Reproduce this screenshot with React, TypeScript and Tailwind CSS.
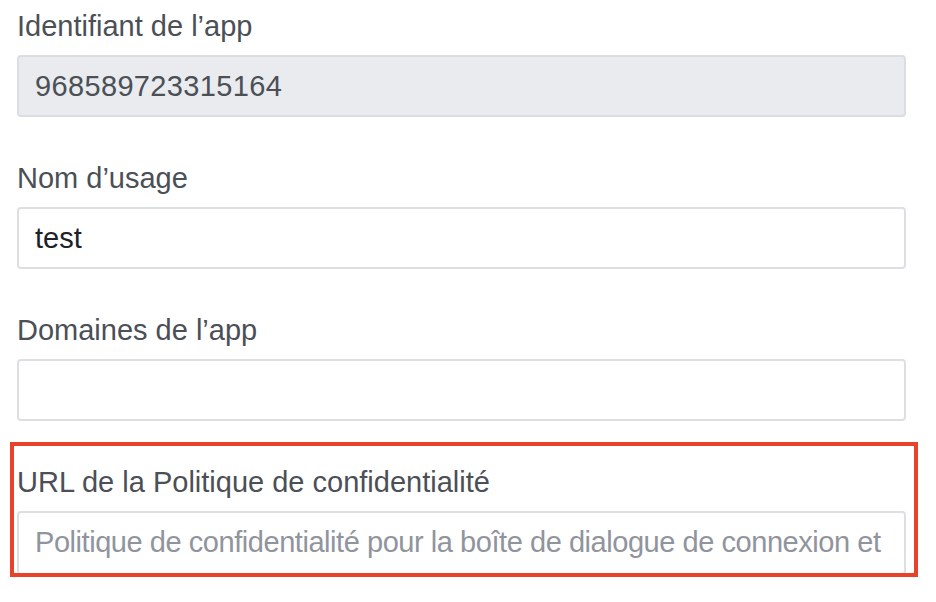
import React from "react";

function Field({ label, children }: { label: string; children: React.ReactNode }) {
  return (
    <div className="flex flex-col">
      <label className="text-[29px] leading-[34px] text-[#4b4f56]">{label}</label>
      <div className="mt-[12px]">{children}</div>
    </div>
  );
}

const inputBase =
  "w-[889px] rounded-[4px] border-2 px-4 text-[29px] outline-none font-['Liberation_Sans',sans-serif]";

export default function App() {
  return (
    <div className="w-[936px] h-[602px] overflow-hidden bg-white pl-[17px] pt-[9px] font-['Liberation_Sans',Arial,sans-serif]">
      <div className="flex flex-col gap-[44px]">
        <Field label="Identifiant de l’app">
          <input
            className={inputBase + " h-[62px] tracking-[0.35px] border-[#dadde1] bg-[#e9ebee] text-[#4b4f56]"}
            value="968589723315164"
            readOnly
            disabled
          />
        </Field>
        <Field label="Nom d’usage">
          <input className={inputBase + " h-[62px] border-[#dddfe2] bg-white text-[#1d2129]"} defaultValue="test" />
        </Field>
        <Field label="Domaines de l’app">
          <input className={inputBase + " h-[62px] border-[#dddfe2] bg-white text-[#1d2129]"} />
        </Field>
        <div className="relative">
          <Field label="URL de la Politique de confidentialité">
            <input
              className={inputBase + " h-[64px] pb-[2px] tracking-[-0.45px] border-[#dddfe2] bg-white text-[#1d2129] placeholder:text-[#90949c]"}
              placeholder="Politique de confidentialité pour la boîte de dialogue de connexion et"
            />
          </Field>
          <span className="pointer-events-none absolute left-[-7px] top-[-23px] w-[908px] h-[135px] border-4 border-[#e9422b]" />
        </div>
      </div>
    </div>
  );
}
